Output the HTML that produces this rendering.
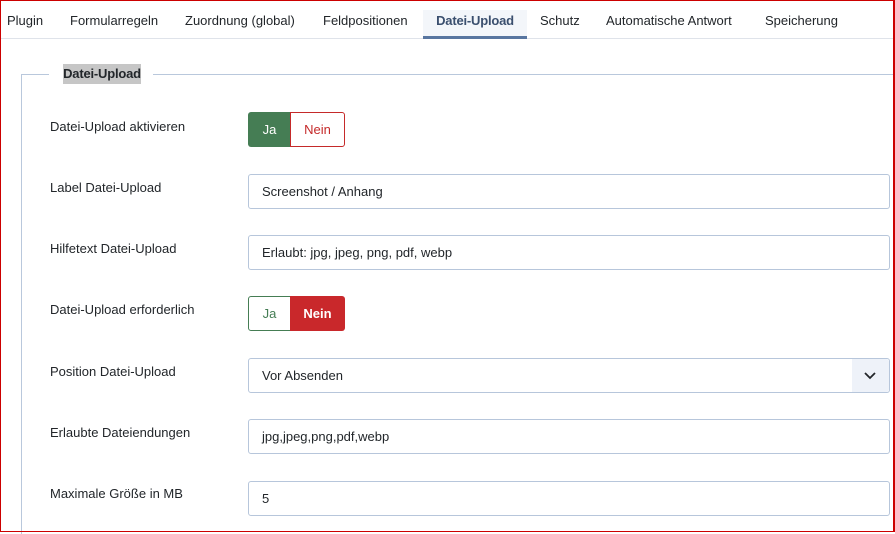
<!DOCTYPE html>
<html><head><meta charset="utf-8"><style>
*{box-sizing:border-box;margin:0;padding:0}
html,body{width:895px;height:532px;overflow:hidden;background:#fff;font-family:"Liberation Sans",Arial,sans-serif;color:#22262a}
div,span{white-space:nowrap}
.frame{position:absolute;left:0;top:0;width:895px;height:532px;border:1px solid #c00;border-right-width:2px;z-index:5}
.tabs{position:absolute;left:1px;top:1px;right:2px;height:38px;border-bottom:1px solid #dfe3ea}
.tab{position:absolute;top:9px;font-size:13px;height:29px;line-height:21px}
.tab.active{background:#f3f6fa;border-bottom:3px solid #5876a0;font-weight:bold;color:#3a4f6e;text-align:center;top:9px}
.fs-l{position:absolute;left:21px;top:74px;width:1px;height:460px;background:#b9c8dc}
.fs-t1{position:absolute;left:21px;top:74px;width:28px;height:1px;background:#b9c8dc}
.fs-t2{position:absolute;left:153px;top:74px;right:0;height:1px;background:#b9c8dc}
.legend{position:absolute;left:63px;top:64px;height:20px;line-height:20px;font-weight:bold;font-size:13px;background:#c6c6c6;color:#22262a;width:78px;text-align:center;letter-spacing:-0.2px}
.lbl{position:absolute;left:50px;font-size:13px;line-height:16px}
.inp{position:absolute;left:248px;width:642px;height:35px;border:1px solid #b7c6db;border-radius:3px;font-size:13px;line-height:33px;padding-left:13px}
.tg{position:absolute;left:248px;height:35px;font-size:13px;line-height:33px;text-align:center}
.tg span{position:absolute;top:0;height:35px}
</style></head><body>
<div class="frame"></div>
<div class="tabs">
<div class="tab" style="left:6px">Plugin</div>
<div class="tab" style="left:69px">Formularregeln</div>
<div class="tab" style="left:184px">Zuordnung (global)</div>
<div class="tab" style="left:322px">Feldpositionen</div>
<div class="tab active" style="left:422px;width:104px;letter-spacing:-0.2px">Datei-Upload</div>
<div class="tab" style="left:539px">Schutz</div>
<div class="tab" style="left:605px">Automatische Antwort</div>
<div class="tab" style="left:764px">Speicherung</div>
</div>
<div class="fs-l"></div><div class="fs-t1"></div><div class="fs-t2"></div>
<div class="legend">Datei-Upload</div>

<div class="lbl" style="top:119px">Datei-Upload aktivieren</div>
<div class="tg" style="top:112px">
<span style="left:0;width:43px;background:#457d54;color:#fff;border-radius:3px 0 0 3px;line-height:35px">Ja</span>
<span style="left:42px;width:55px;border:1px solid #c52a2a;color:#c52a2a;border-radius:0 3px 3px 0">Nein</span>
</div>

<div class="lbl" style="top:180px">Label Datei-Upload</div>
<div class="inp" style="top:174px">Screenshot / Anhang</div>

<div class="lbl" style="top:241px">Hilfetext Datei-Upload</div>
<div class="inp" style="top:235px">Erlaubt: jpg, jpeg, png, pdf, webp</div>

<div class="lbl" style="top:302px">Datei-Upload erforderlich</div>
<div class="tg" style="top:296px">
<span style="left:0;width:43px;border:1px solid #457d54;color:#457d54;border-radius:3px 0 0 3px">Ja</span>
<span style="left:42px;width:55px;background:#c9282b;color:#fff;font-weight:bold;border-radius:0 3px 3px 0;line-height:35px">Nein</span>
</div>

<div class="lbl" style="top:364px">Position Datei-Upload</div>
<div class="inp" style="top:358px">Vor Absenden
<div style="position:absolute;right:0;top:0;width:37px;height:33px;background:#eef2f9;border-radius:0 3px 3px 0">
<svg width="37" height="33" viewBox="0 0 37 33"><path d="M13 14l5 5 5-5" fill="none" stroke="#22262a" stroke-width="1.8"/></svg></div></div>

<div class="lbl" style="top:425px">Erlaubte Dateiendungen</div>
<div class="inp" style="top:419px">jpg,jpeg,png,pdf,webp</div>

<div class="lbl" style="top:486px">Maximale Größe in MB</div>
<div class="inp" style="top:481px">5</div>
</body></html>
